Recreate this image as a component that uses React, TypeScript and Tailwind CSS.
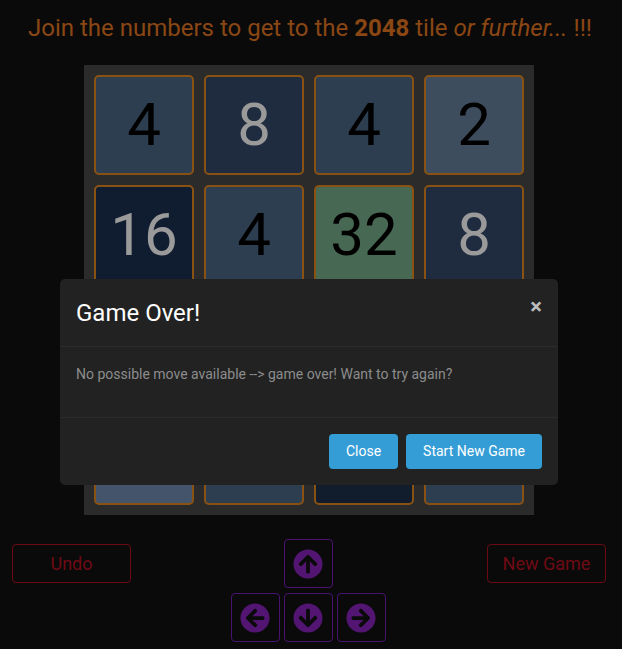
import React from 'react';
import { FaArrowCircleUp, FaArrowCircleDown, FaArrowCircleLeft, FaArrowCircleRight } from 'react-icons/fa';

type Tile = { value: number; bg: string; fg: string };

const tileStyle: Record<number, { bg: string; fg: string }> = {
  2: { bg: 'bg-[#3e4d5e]', fg: 'text-black' },
  4: { bg: 'bg-[#2e3e51]', fg: 'text-black' },
  8: { bg: 'bg-[#1f2b3e]', fg: 'text-[#9a9a9a]' },
  16: { bg: 'bg-[#101d31]', fg: 'text-[#9a9a9a]' },
  32: { bg: 'bg-[#476852]', fg: 'text-black' },
};

const rows: { value: number; bg?: string }[][] = [
  [{ value: 4 }, { value: 8 }, { value: 4 }, { value: 2 }],
  [{ value: 16 }, { value: 4 }, { value: 32 }, { value: 8 }],
  [{ value: 2 }, { value: 16 }, { value: 8 }, { value: 4 }],
  [{ value: 2, bg: 'bg-[#44546a]' }, { value: 4 }, { value: 16, bg: 'bg-[#111c2d]' }, { value: 4 }],
];

const board: Tile[][] = rows.map(r =>
  r.map(t => ({
    value: t.value,
    bg: t.bg ?? tileStyle[t.value].bg,
    fg: tileStyle[t.value].fg,
  }))
);

const ArrowKey: React.FC<{ icon: React.ReactNode }> = ({ icon }) => (
  <div className="w-[49px] h-[49px] border border-[#4a1270] rounded-[4px] flex items-center justify-center text-[#521571]">
    {icon}
  </div>
);

const App: React.FC = () => {
  return (
    <div className="relative w-[622px] h-[649px] bg-[#0a0a0a] overflow-hidden" style={{ fontFamily: 'Roboto, "Liberation Sans", sans-serif' }}>
      <h1 className="pt-[13px] pr-[2px] text-center text-[24px] leading-[30px] text-[#8a4714]">
        Join the numbers to get to the <b className="font-bold">2048</b> tile <i>or further...</i> !!!
      </h1>

      <div className="ml-[84px] mt-[22px] w-[450px] h-[450px] bg-[#2b2b2b] p-[10px] grid grid-cols-4 gap-[10px]">
        {board.flat().map((t, i) => (
          <div
            key={i}
            className={`${t.bg} ${t.fg} border-2 border-[#8a5212] rounded-[5px] flex items-center justify-center text-[60px] leading-none`}
          >
            {t.value}
          </div>
        ))}
      </div>

      <div className="mt-[24px] pl-3 pr-4 flex justify-between items-start">
        <button className="mt-[5px] w-[119px] h-[39px] border border-[#6b0a14] rounded-[4px] text-[#6f0b14] text-[18px]">
          Undo
        </button>
        <div className="flex flex-col items-center gap-[5px] mr-[2px]">
          <ArrowKey icon={<FaArrowCircleUp size={30} />} />
          <div className="flex gap-[4px]">
            <ArrowKey icon={<FaArrowCircleLeft size={30} />} />
            <ArrowKey icon={<FaArrowCircleDown size={30} />} />
            <ArrowKey icon={<FaArrowCircleRight size={30} />} />
          </div>
        </div>
        <button className="mt-[5px] w-[119px] h-[39px] border border-[#6b0a14] rounded-[4px] text-[#6f0b14] text-[18px]">
          New Game
        </button>
      </div>

      <div className="absolute inset-0 flex justify-start pl-[60px] pt-[279px]">
        <div className="w-[498px] h-[206px] bg-[#222222] rounded-[5px] flex flex-col">
          <div className="h-[68px] px-4 flex items-start justify-between border-b border-[#2c2c2c]">
            <h2 className="mt-[20px] text-[24px] leading-[28px] text-white">Game Over!</h2>
            <span className="mt-[11px] text-[22px] font-bold text-[#bbbbbb]">×</span>
          </div>
          <div className="h-[71px] px-4 pt-[17px] text-[14px] text-[#8c8c8c] border-b border-[#2c2c2c]">
            No possible move available --&gt; game over! Want to try again?
          </div>
          <div className="flex-1 flex items-center justify-end gap-2 px-4">
            <button className="h-[35px] px-[17px] rounded-[4px] bg-[#359dd6] text-white text-[14px]">Close</button>
            <button className="h-[35px] px-[17px] rounded-[4px] bg-[#359dd6] text-white text-[14px]">Start New Game</button>
          </div>
        </div>
      </div>
    </div>
  );
};

export default App;
